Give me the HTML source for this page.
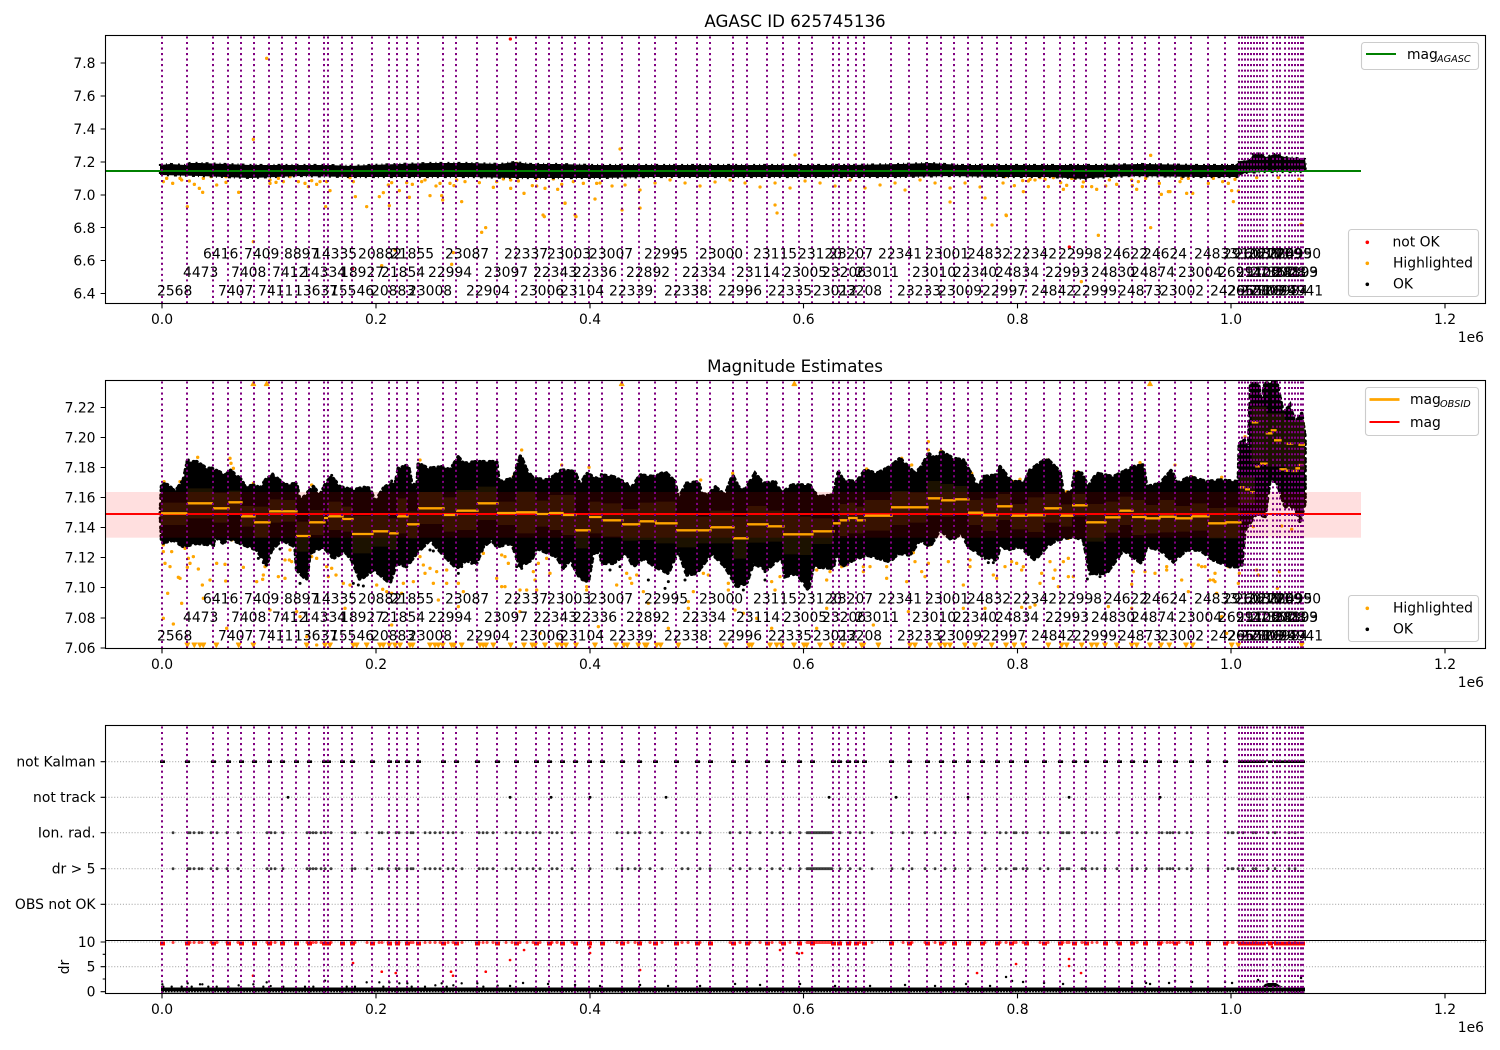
<!DOCTYPE html>
<html lang="en">
<head>
<meta charset="utf-8">
<title>AGASC ID 625745136</title>
<style>
html,body{margin:0;padding:0;background:#fff}
svg{display:block}
text{font-family:"DejaVu Sans","Liberation Sans",sans-serif;font-size:13.89px;fill:#000}
.r{text-anchor:end}.c{text-anchor:middle}
.sub{font-size:9.7px;font-style:italic}
.d{fill:none;stroke-linecap:round}
</style>
</head>
<body>
<svg xmlns="http://www.w3.org/2000/svg" width="1500" height="1050" viewBox="0 0 1500 1050">
<defs>
<clipPath id="c1"><rect x="105.5" y="35.5" width="1380" height="268"/></clipPath>
<clipPath id="c2"><rect x="105.5" y="380.5" width="1380" height="268"/></clipPath>
<clipPath id="c3"><rect x="105.5" y="725.5" width="1380" height="268"/></clipPath>
<path id="v" fill="none" stroke="#800080" stroke-width="2" stroke-dasharray="2.08 3.44" d="M162 0v-268M187 0v-268M213 0v-268M228 0v-268M241 0v-268M254 0v-268M269 0v-268M282 0v-268M296 0v-268M309 0v-268M324 0v-268M328 0v-268M342 0v-268M352 0v-268M372 0v-268M389 0v-268M397 0v-268M407 0v-268M418 0v-268M443 0v-268M456 0v-268M477 0v-268M497 0v-268M516 0v-268M536 0v-268M549 0v-268M562 0v-268M575 0v-268M589 0v-268M602 0v-268M622 0v-268M639 0v-268M655 0v-268M676 0v-268M697 0v-268M710 0v-268M733 0v-268M747 0v-268M767 0v-268M783 0v-268M799 0v-268M812 0v-268M833 0v-268M839 0v-268M848 0v-268M856 0v-268M864 0v-268M891 0v-268M909 0v-268M927 0v-268M941 0v-268M954 0v-268M968 0v-268M982 0v-268M997 0v-268M1011 0v-268M1026 0v-268M1044 0v-268M1060 0v-268M1074 0v-268M1086 0v-268M1105 0v-268M1119 0v-268M1132 0v-268M1145 0v-268M1159 0v-268M1175 0v-268M1191 0v-268M1208 0v-268M1225 0v-268M1239 0v-268M1242 0v-268M1245 0v-268M1248 0v-268M1251 0v-268M1254 0v-268M1257 0v-268M1260 0v-268M1263 0v-268M1267 0v-268M1273 0v-268M1277 0v-268M1280 0v-268M1285 0v-268M1289 0v-268M1292 0v-268M1295 0v-268M1298 0v-268M1301 0v-268M1303 0v-268"/>
<path id="m" fill="none" d="M160 0h5M185 0h5M211 0h5M226 0h5M239 0h5M252 0h5M267 0h5M280 0h5M294 0h5M307 0h5M322 0h5M326 0h5M340 0h5M350 0h5M370 0h5M387 0h5M395 0h5M405 0h5M416 0h5M441 0h5M454 0h5M475 0h5M495 0h5M514 0h5M534 0h5M547 0h5M560 0h5M573 0h5M587 0h5M600 0h5M620 0h5M637 0h5M653 0h5M674 0h5M695 0h5M708 0h5M731 0h5M745 0h5M765 0h5M781 0h5M797 0h5M810 0h5M831 0h5M837 0h5M846 0h5M854 0h5M862 0h5M889 0h5M907 0h5M925 0h5M939 0h5M952 0h5M966 0h5M980 0h5M995 0h5M1009 0h5M1024 0h5M1042 0h5M1058 0h5M1072 0h5M1084 0h5M1103 0h5M1117 0h5M1130 0h5M1143 0h5M1157 0h5M1173 0h5M1189 0h5M1206 0h5M1223 0h5M1238 0H1266M1268 0h5M1274 0h5M1278 0H1305"/>
<path id="f" class="d" d="M173 0h.1M188 0h.1M190 0h.1M194 0h.1M199 0h.1M202 0h.1M211 0h.1M217 0h.1M227 0h.1M238 0h.1M267 0h.1M271 0h.1M275 0h.1M283 0h.1M307 0h.1M310 0h.1M313 0h.1M316 0h.1M321 0h.1M325 0h.1M331 0h.1M352 0h.1M355 0h.1M367 0h.1M379 0h.1M382 0h.1M388 0h.1M396 0h.1M399 0h.1M407 0h.1M411 0h.1M413 0h.1M425 0h.1M430 0h.1M435 0h.1M440 0h.1M448 0h.1M453 0h.1M462 0h.1M479 0h.1M483 0h.1M487 0h.1M493 0h.1M506 0h.1M512 0h.1M520 0h.1M527 0h.1M533 0h.1M540 0h.1M552 0h.1M557 0h.1M572 0h.1M590 0h.1M617 0h.1M622 0h.1M628 0h.1M635 0h.1M640 0h.1M650 0h.1M662 0h.1M682 0h.1M688 0h.1M700 0h.1M710 0h.1M730 0h.1M740 0h.1M750 0h.1M760 0h.1M772 0h.1M780 0h.1M790 0h.1M800 0h.1M807 0H832M840 0h.1M850 0h.1M860 0h.1M872 0h.1M892 0h.1M903 0h.1M912 0h.1M925 0h.1M935 0h.1M945 0h.1M955 0h.1M970 0h.1M985 0h.1M1000 0h.1M1006 0h.1M1014 0h.1M1016 0h.1M1023 0h.1M1027 0h.1M1040 0h.1M1048 0h.1M1061 0h.1M1063 0h.1M1067 0h.1M1069 0h.1M1082 0h.1M1085 0h.1M1092 0h.1M1097 0h.1M1105 0h.1M1117 0h.1M1132 0h.1M1137 0h.1M1146 0h.1M1159 0h.1M1162 0h.1M1167 0h.1M1170 0h.1M1173 0h.1M1179 0h.1M1187 0h.1M1192 0h.1M1208 0h.1M1228 0h.1M1232 0h.1M1233 0h.1M1238 0h.1M1243 0h.1M1253 0h.1M1256 0h.1M1268 0h.1M1275 0h.1M1289 0h.1M1295 0h.1"/>
<path id="B1" d="M160 165 170 164 185 165 190 163 200 163 225 164 250 165 275 165 300 165 330 165 350 166 370 165 400 164 430 163 470 163 500 164 515 162 530 164 560 164 590 165 650 165 700 165 760 165 800 165 850 165 900 164 930 163 960 165 1000 165 1040 165 1100 165 1140 164 1200 165 1235 165 1240 161 1250 160 1253 154 1260 153 1266 157 1275 154 1285 157 1296 158 1305 159 1306 166 1305 172 1262 172 1245 173 1237 177 1200 177 1130 176 1090 178 1085 179 1050 177 1000 177 950 176 900 177 850 177 800 177 750 177 700 177 650 177 600 178 550 178 515 178 470 177 430 177 350 177 300 176 250 178 200 176 160 175Z"/>
<path id="Pa" d="M181 430 185 340 205 345 225 365 250 330 262 275 290 275 320 295 335 295 378 315 390 300 425 330 435 350 465 345 480 355 500 325 520 315 555 345 590 340 600 395 625 365 640 350 660 375 680 335 695 320 720 350 760 360 790 352 810 355 825 395 850 355 870 340 885 345 895 295 925 285 935 340 945 345 950 370 955 280 985 295 1030 290 1050 300 1075 260 1090 280 1130 275 1190 275 1197 335 1240 325 1262 255 1280 300 1300 325 1345 330 1385 300 1425 305 1440 345 1460 310 1500 330 1500 545 1480 550 1465 635 1440 625 1410 570 1390 595 1370 560 1345 550 1310 535 1295 570 1260 590 1235 520 1190 530 1175 510 1150 530 1130 580 1100 570 1070 595 1030 555 990 510 950 550 920 590 890 580 870 640 835 610 820 600 780 630 755 570 735 545 700 565 670 530 630 550 620 630 590 600 585 530 545 510 515 540 500 585 470 540 420 520 385 505 370 520 345 500 340 525 290 520 250 530 220 510 185 520Z"/>
<path id="Pb" d="M0 330 5 315 40 320 80 340 90 360 120 315 165 320 195 305 225 335 235 385 260 340 295 335 305 370 325 375 345 350 375 375 398 315 415 350 435 360 465 310 490 340 525 335 545 370 575 345 630 345 640 365 660 380 700 375 715 305 730 330 770 335 795 300 830 310 870 290 900 265 925 290 945 310 965 290 985 250 1005 265 1025 245 1060 265 1090 270 1110 305 1135 355 1150 320 1190 315 1202 290 1202 520 1190 570 1150 560 1105 530 1085 490 1055 510 1020 480 990 530 960 510 930 555 895 550 870 575 800 555 760 570 725 590 710 540 700 595 640 590 625 660 590 610 555 620 545 560 500 600 460 580 440 640 410 650 375 590 335 550 290 610 260 615 235 540 205 610 165 590 130 565 100 590 80 550 40 580 5 580 0 545Z"/>
<path id="Pc" d="M0 290 35 335 75 335 90 300 140 265 180 305 190 370 215 365 225 305 245 310 265 350 290 310 340 320 400 290 430 285 440 350 480 340 515 300 530 340 570 320 620 335 660 330 715 335 718 220 735 210 745 260 752 40 775 40 785 100 795 40 830 35 850 130 870 105 885 160 905 130 915 200 915 400 900 455 885 410 855 410 830 335 810 330 795 440 770 430 735 480 725 590 690 590 640 570 600 540 560 540 520 575 480 540 440 530 425 580 370 540 320 610 270 610 250 510 220 500 170 510 140 530 105 570 60 530 20 540 0 520Z"/>
</defs>
<rect width="1500" height="1050" fill="#fff"/>

<!-- ===== Panel 1 ===== -->
<g clip-path="url(#c1)">
 <g transform="translate(100,0) scale(.33333)" class="d" stroke="#ffa500" stroke-width="10">
  <path d="M190 545h.1M200 535h.1M218 550h.1M240 535h.1M245 540h.1M268 543h.1M283 553h.1M298 565h.1M308 577h.1M310 535h.1M333 530h.1M350 555h.1M378 547h.1M378 530h.1M416 577h.1M262 620h.1M460 418h.1M500 175h.1M460 725h.1M510 550h.1M510 540h.1M528 547h.1M535 535h.1M550 545h.1M570 530h.1M595 545h.1M615 550h.1M625 560h.1M635 542h.1M650 553h.1M660 545h.1M690 572h.1M677 620h.1M680 545h.1M750 533h.1M760 545h.1M766 590h.1M800 620h.1M838 590h.1M850 578h.1M868 617h.1M865 555h.1M875 548h.1M898 572h.1M928 592h.1M920 548h.1M937 553h.1M885 750h.1M845 797h.1M965 545h.1M975 540h.1M990 587h.1M1008 558h.1M1020 550h.1M1025 587h.1M1028 600h.1M1050 550h.1M1062 557h.1M1070 540h.1M1085 605h.1M1095 545h.1M1060 758h.1M1055 793h.1M1138 548h.1M1145 697h.1M1157 683h.1M1180 562h.1M1190 545h.1M1210 537h.1M1232 565h.1M1232 540h.1M1255 543h.1M1272 580h.1M1297 557h.1M1310 558h.1M1310 535h.1M1335 565h.1M1333 650h.1M1360 537h.1M1373 568h.1M1385 553h.1M1395 610h.1M1428 650h.1M1420 545h.1M1450 550h.1M1485 597h.1M1490 550h.1M1250 490h.1"/>
 </g>
 <path class="d" stroke="#ffa500" stroke-width="3.2" d="M620 149h.1M795 155h.1M777 213h.1M775 205h.1M543 215h.1M565 203h.1M575 215h.1M622 210h.1M640 208h.1M600 183h.1M612 186h.1M625 185h.1M640 190h.1M655 183h.1M670 180h.1M685 183h.1M700 186h.1M715 182h.1M730 180h.1M745 183h.1M760 187h.1M775 183h.1M790 188h.1M805 181h.1M820 183h.1M835 186h.1M850 180h.1M865 188h.1M880 185h.1M895 183h.1M905 190h.1M920 180h.1M935 183h.1M950 202h.1M950 188h.1M965 183h.1M980 187h.1M992 225h.1M1006 215h.1M985 198h.1M1003 183h.1"/>
 <g transform="translate(1000,0) scale(.33333)" class="d" stroke="#ffa500" stroke-width="10">
  <path d="M15 530h.1M43 557h.1M70 575h.1M68 542h.1M85 543h.1M90 538h.1M105 540h.1M120 533h.1M135 538h.1M145 560h.1M160 533h.1M182 548h.1M190 568h.1M200 556h.1M215 535h.1M225 535h.1M250 546h.1M247 560h.1M275 560h.1M290 568h.1M317 558h.1M328 540h.1M350 553h.1M397 557h.1M410 568h.1M415 545h.1M395 540h.1M437 535h.1M452 466h.1M478 550h.1M484 583h.1M505 575h.1M510 575h.1M545 535h.1M540 545h.1M560 580h.1M578 580h.1M565 535h.1M625 550h.1M640 535h.1M668 545h.1M695 572h.1M685 550h.1M715 573h.1M700 605h.1M705 538h.1M770 533h.1M835 533h.1M897 538h.1M903 673h.1M452 683h.1M295 706h.1M244 845h.1M19 647h.1"/>
 </g>
 <use href="#B1" fill="#000"/>
 <use href="#B1" fill="none" stroke="#000" stroke-width="2.2" stroke-dasharray="2 4 1 3 3 5"/>
 <path d="M105.5 171H1361" stroke="#008000" stroke-width="2.1" fill="none"/>
 <path class="d" stroke="#f00" stroke-width="3.2" d="M510.3 39h.1M352.3 269h.1M1069.3 247h.1"/>
 <use href="#v" x="0" y="303.5"/>
</g>
<rect x="105.5" y="35.5" width="1380" height="268" fill="none" stroke="#000" stroke-width="1.1"/>
<path fill="none" stroke="#000" stroke-width="1.1" d="M162 303.5v4.9M376 303.5v4.9M590 303.5v4.9M803.5 303.5v4.9M1017.5 303.5v4.9M1231 303.5v4.9M1445 303.5v4.9M105.5 63h-4.9M105.5 96h-4.9M105.5 129h-4.9M105.5 162h-4.9M105.5 195h-4.9M105.5 227.500h-4.9M105.5 260.500h-4.9M105.5 293.500h-4.9"/>
<text class="c" x="795" y="27" style="font-size:16.67px">AGASC ID 625745136</text>
<g class="r"><text x="95.500" y="68">7.8</text><text x="95.500" y="101">7.6</text><text x="95.500" y="134">7.4</text><text x="95.500" y="167">7.2</text><text x="95.500" y="200">7.0</text><text x="95.500" y="233">6.8</text><text x="95.500" y="265.500">6.6</text><text x="95.500" y="298.500">6.4</text></g>
<g class="c"><text x="162" y="324">0.0</text><text x="376" y="324">0.2</text><text x="590" y="324">0.4</text><text x="803.500" y="324">0.6</text><text x="1017.500" y="324">0.8</text><text x="1231" y="324">1.0</text><text x="1445" y="324">1.2</text></g>
<text class="r" x="1484" y="342">1e6</text>
<text y="258.500"><tspan x="203">6416</tspan><tspan x="244">7409</tspan><tspan x="284">8897</tspan><tspan x="313">14335</tspan><tspan x="358">20882</tspan><tspan x="390">21855</tspan><tspan x="445">23087</tspan><tspan x="504">22337</tspan><tspan x="547">23003</tspan><tspan x="589">23007</tspan><tspan x="644">22995</tspan><tspan x="699">23000</tspan><tspan x="753">23115</tspan><tspan x="798">23120</tspan><tspan x="829">23207</tspan><tspan x="878">22341</tspan><tspan x="925">23001</tspan><tspan x="967">24832</tspan><tspan x="1013">22342</tspan><tspan x="1058">22998</tspan><tspan x="1104">24622</tspan><tspan x="1143">24624</tspan><tspan x="1194">24833</tspan><tspan x="1223">29101</tspan><tspan x="1235">26038</tspan><tspan x="1247">26181</tspan><tspan x="1258">27269</tspan><tspan x="1268">28099</tspan><tspan x="1277">24950</tspan></text>
<text y="277"><tspan x="183">4473</tspan><tspan x="231">7408</tspan><tspan x="272">7412</tspan><tspan x="302">14334</tspan><tspan x="340">18927</tspan><tspan x="381">21854</tspan><tspan x="428">22994</tspan><tspan x="484">23097</tspan><tspan x="533">22343</tspan><tspan x="573">22336</tspan><tspan x="626">22892</tspan><tspan x="682">22334</tspan><tspan x="736">23114</tspan><tspan x="783">23005</tspan><tspan x="822">23206</tspan><tspan x="855">23011</tspan><tspan x="912">23010</tspan><tspan x="953">22340</tspan><tspan x="995">24834</tspan><tspan x="1045">22993</tspan><tspan x="1091">24830</tspan><tspan x="1131">24874</tspan><tspan x="1178">23004</tspan><tspan x="1218">26914</tspan><tspan x="1236">29102</tspan><tspan x="1250">27367</tspan><tspan x="1262">26028</tspan><tspan x="1274">28103</tspan><tspan x="1274">24899</tspan></text>
<text y="295.500"><tspan x="157">2568</tspan><tspan x="218">7407</tspan><tspan x="258">7411</tspan><tspan x="294">13637</tspan><tspan x="330">15546</tspan><tspan x="371">20883</tspan><tspan x="408">23008</tspan><tspan x="466">22904</tspan><tspan x="520">23006</tspan><tspan x="560">23104</tspan><tspan x="609">22339</tspan><tspan x="664">22338</tspan><tspan x="718">22996</tspan><tspan x="768">22335</tspan><tspan x="813">23012</tspan><tspan x="838">23208</tspan><tspan x="897">23233</tspan><tspan x="938">23009</tspan><tspan x="982">22997</tspan><tspan x="1031">24842</tspan><tspan x="1073">22999</tspan><tspan x="1118">24873</tspan><tspan x="1160">23002</tspan><tspan x="1210">24296</tspan><tspan x="1227">26551</tspan><tspan x="1240">27809</tspan><tspan x="1252">28099</tspan><tspan x="1264">26984</tspan><tspan x="1279">24941</tspan></text>
<rect x="1361.500" y="42.500" width="117" height="27" rx="3" fill="#fff" fill-opacity=".8" stroke="#ccc" stroke-width="1.1"/>
<path d="M1366 54h30" stroke="#008000" stroke-width="2.1"/>
<text x="1407" y="59">mag</text><text class="sub" x="1437" y="62">AGASC</text>
<rect x="1348.500" y="229.500" width="130" height="67" rx="3" fill="#fff" fill-opacity=".8" stroke="#ccc" stroke-width="1.1"/>
<circle cx="1367.300" cy="242.300" r="1.800" fill="#f00"/><circle cx="1367.300" cy="263.300" r="1.800" fill="#ffa500"/><circle cx="1367.300" cy="284.300" r="1.800" fill="#000"/>
<text x="1392.500" y="246.500">not OK</text><text x="1393" y="267.500">Highlighted</text><text x="1393" y="288.500">OK</text>

<!-- ===== Panel 2 ===== -->
<g clip-path="url(#c2)">
 <g transform="translate(100,370) scale(.33333)">
  <path class="d" stroke="#ffa500" stroke-width="10" d="M195 580h.1M210 590h.1M235 622h.1M240 625h.1M220 762h.1M203 670h.1M190 745h.1M215 545h.1M190 545h.1M265 565h.1M280 560h.1M270 580h.1M295 597h.1M262 592h.1M307 645h.1M330 630h.1M350 580h.1M375 583h.1M377 633h.1M380 775h.1M430 592h.1M470 635h.1M488 628h.1M495 590h.1M490 615h.1M510 720h.1M535 620h.1M555 570h.1M568 570h.1M575 575h.1M570 540h.1M555 625h.1M590 725h.1M600 740h.1M635 560h.1M650 565h.1M650 825h.1M620 800h.1M680 590h.1M685 620h.1M695 595h.1M708 615h.1M730 640h.1M735 715h.1M750 645h.1M830 645h.1M848 658h.1M860 665h.1M875 670h.1M875 765h.1M905 670h.1M910 640h.1M940 635h.1M960 560h.1M970 585h.1M975 610h.1M990 595h.1M1000 640h.1M1010 605h.1M1015 690h.1M1040 600h.1M1040 640h.1M1075 640h.1M1075 710h.1M1090 665h.1M1150 550h.1M1190 625h.1M1205 555h.1M1215 560h.1M1225 580h.1M1205 650h.1M1215 650h.1M1260 660h.1M1280 660h.1M1260 725h.1M1300 605h.1M1305 630h.1M1310 660h.1M1315 580h.1M1340 565h.1M1350 610h.1M1320 790h.1M1380 565h.1M1390 575h.1M1460 660h.1M1495 770h.1M310 685h.1M245 700h.1M293 262h.1M390 265h.1M393 280h.1M400 295h.1M240 335h.1M250 328h.1M192 335h.1M460 340h.1M635 345h.1M960 270h.1M1065 285h.1M1265 240h.1M1240 320h.1M1245 310h.1M1205 335h.1M1385 285h.1M1467 292h.1M190 525h.1M255 535h.1M395 510h.1M410 508h.1M1385 570h.1M1380 560h.1M1455 630h.1M1460 650h.1M1240 525h.1M630 560h.1"/>
  <path fill="#ffa500" stroke="#ffa500" stroke-width="3" stroke-linejoin="round" d="M262 832l7-13h-14zM283 832l7-13h-14zM300 832l7-13h-14zM310 832l7-13h-14zM349 832l7-13h-14zM416 832l7-13h-14zM460 832l7-13h-14zM620 832l7-13h-14zM675 832l7-13h-14zM690 832l7-13h-14zM760 832l7-13h-14zM770 832l7-13h-14zM800 832l7-13h-14zM840 832l7-13h-14zM850 832l7-13h-14zM868 832l7-13h-14zM885 832l7-13h-14zM900 832l7-13h-14zM930 832l7-13h-14zM938 832l7-13h-14zM990 832l7-13h-14zM1005 832l7-13h-14zM1015 832l7-13h-14zM1028 832l7-13h-14zM1055 832l7-13h-14zM1062 832l7-13h-14zM1085 832l7-13h-14zM1140 832l7-13h-14zM1150 832l7-13h-14zM1158 832l7-13h-14zM1180 832l7-13h-14zM1232 832l7-13h-14zM1272 832l7-13h-14zM1297 832l7-13h-14zM1305 832l7-13h-14zM1335 832l7-13h-14zM1372 832l7-13h-14zM1385 832l7-13h-14zM1398 832l7-13h-14zM1428 832l7-13h-14zM1485 832l7-13h-14zM460 34l7 13h-14zM500 34l7 13h-14z"/>
  <use href="#Pa" fill="#000"/>
  <use href="#Pa" fill="none" stroke="#000" stroke-width="11" stroke-linecap="round" stroke-dasharray="2 13 1 9 3 17 1 7"/>
  <path class="d" stroke="#000" stroke-width="9" d="M265 270h.1M600 640h.1M475 565h.1M490 578h.1M540 537h.1M760 640h.1M775 645h.1M790 648h.1M835 605h.1M990 540h.1M1000 543h.1M1075 610h.1M1085 590h.1M1105 575h.1M1115 580h.1M1130 600h.1M875 333h.1M695 316h.1M518 312h.1M1265 595h.1M1250 590h.1"/>
 </g>
 <g transform="translate(600,370) scale(.33333)">
  <path class="d" stroke="#ffa500" stroke-width="10" d="M50 645h.1M80 610h.1M90 625h.1M95 640h.1M130 665h.1M110 615h.1M145 700h.1M205 775h.1M265 695h.1M265 715h.1M280 665h.1M310 610h.1M325 615h.1M385 660h.1M385 640h.1M405 720h.1M430 730h.1M470 745h.1M515 775h.1M515 635h.1M525 660h.1M540 620h.1M650 600h.1M680 630h.1M690 605h.1M680 715h.1M650 775h.1M725 590h.1M740 585h.1M745 575h.1M790 590h.1M790 605h.1M810 590h.1M820 765h.1M860 590h.1M860 625h.1M920 635h.1M925 725h.1M945 575h.1M965 605h.1M975 620h.1M985 580h.1M1045 575h.1M1090 645h.1M1090 715h.1M1110 570h.1M1110 590h.1M1155 715h.1M1180 615h.1M1190 625h.1M398 310h.1M985 215h.1M985 240h.1M1023 243h.1M905 265h.1M935 285h.1M875 292h.1M800 297h.1M990 525h.1M700 377h.1M302 330h.1M1115 310h.1M940 548h.1"/>
  <path fill="#ffa500" stroke="#ffa500" stroke-width="3" stroke-linejoin="round" d="M48 832l7-13h-14zM72 832l7-13h-14zM82 832l7-13h-14zM115 832l7-13h-14zM135 832l7-13h-14zM140 832l7-13h-14zM170 832l7-13h-14zM182 832l7-13h-14zM235 832l7-13h-14zM378 832l7-13h-14zM447 832l7-13h-14zM455 832l7-13h-14zM510 832l7-13h-14zM530 832l7-13h-14zM545 832l7-13h-14zM582 832l7-13h-14zM612 832l7-13h-14zM620 832l7-13h-14zM660 832l7-13h-14zM695 832l7-13h-14zM730 832l7-13h-14zM785 832l7-13h-14zM790 832l7-13h-14zM835 832l7-13h-14zM930 832l7-13h-14zM945 832l7-13h-14zM990 832l7-13h-14zM1020 832l7-13h-14zM1035 832l7-13h-14zM1050 832l7-13h-14zM1095 832l7-13h-14zM1125 832l7-13h-14zM1175 832l7-13h-14zM65 34l7 13h-14zM583 34l7 13h-14z"/>
  <use href="#Pb" fill="#000"/>
  <use href="#Pb" fill="none" stroke="#000" stroke-width="11" stroke-linecap="round" stroke-dasharray="2 13 1 9 3 17 1 7"/>
  <path class="d" stroke="#000" stroke-width="9" d="M30 600h.1M145 630h.1M205 635h.1M195 655h.1M255 630h.1M430 660h.1M495 605h.1M495 630h.1M1155 565h.1M1180 578h.1M60 590h.1M1165 578h.1"/>
 </g>
 <g transform="translate(1000,370) scale(.33333)">
  <path class="d" stroke="#ffa500" stroke-width="10" d="M15 590h.1M35 575h.1M50 580h.1M70 590h.1M65 600h.1M120 640h.1M125 610h.1M160 625h.1M165 600h.1M150 575h.1M190 575h.1M205 565h.1M205 620h.1M220 620h.1M175 650h.1M65 712h.1M90 712h.1M105 705h.1M325 710h.1M395 715h.1M400 605h.1M395 643h.1M435 605h.1M465 610h.1M500 590h.1M500 600h.1M545 630h.1M565 665h.1M595 585h.1M605 590h.1M615 590h.1M630 630h.1M640 630h.1M645 635h.1M650 670h.1M645 610h.1M665 740h.1M680 790h.1M685 590h.1M715 640h.1M718 610h.1M770 600h.1M775 615h.1M838 605h.1M832 655h.1M845 468h.1M875 478h.1M760 470h.1M142 270h.1M60 328h.1M40 335h.1M232 305h.1M200 365h.1M665 322h.1M720 352h.1M525 285h.1M575 320h.1M445 350h.1M545 340h.1M455 530h.1M420 278h.1M735 200h.1M870 105h.1M858 170h.1M880 175h.1M205 505h.1M440 530h.1M470 532h.1"/>
  <path fill="#ffa500" stroke="#ffa500" stroke-width="3" stroke-linejoin="round" d="M18 832l7-13h-14zM43 832l7-13h-14zM70 832l7-13h-14zM145 832l7-13h-14zM185 832l7-13h-14zM200 832l7-13h-14zM245 832l7-13h-14zM275 832l7-13h-14zM290 832l7-13h-14zM315 832l7-13h-14zM350 832l7-13h-14zM395 832l7-13h-14zM410 832l7-13h-14zM450 832l7-13h-14zM483 832l7-13h-14zM508 832l7-13h-14zM558 832l7-13h-14zM578 832l7-13h-14zM695 832l7-13h-14zM715 832l7-13h-14zM905 832l7-13h-14zM450 34l7 13h-14zM800 34l7 13h-14zM828 34l7 13h-14z"/>
  <use href="#Pc" fill="#000"/>
  <use href="#Pc" fill="none" stroke="#000" stroke-width="11" stroke-linecap="round" stroke-dasharray="2 13 1 9 3 17 1 7"/>
  <path class="d" stroke="#000" stroke-width="9" d="M262 627h.1M270 612h.1M290 612h.1M300 620h.1M315 605h.1M745 250h.1"/>
 </g>
 <rect x="105.500" y="492" width="1255.500" height="45.700" fill="#f00" fill-opacity=".125"/>
 <g transform="translate(100,370) scale(.33333)" fill="#ffa500" fill-opacity=".11">
  <path d="M183 398H262V465H183ZM262 355H339V445H262ZM339 368H384V458H339ZM385 362H423V432H385ZM423 408H462V470H423ZM462 410H507V503H462ZM507 388H546V458H507ZM546 390H588V455H546ZM588 455H627V545H588ZM627 420H672V495H627ZM684 395H726V480H684ZM726 410H756V485H726ZM756 437H816V550H756ZM816 435H867V530H816ZM867 445H891V540H867ZM891 385H921V490H891ZM921 425H954V505H921ZM954 366H1029V462H954ZM1029 382H1068V485H1029ZM1068 360H1131V480H1068ZM1131 350H1191V450H1131ZM1191 395H1248V465H1191ZM1248 365H1307V490H1248ZM1307 392H1347V470H1307ZM1347 375H1386V480H1347ZM1386 375H1425V495H1386ZM1425 435H1467V535H1425ZM1467 395H1505V490H1467Z"/>
 </g>
 <g transform="translate(600,370) scale(.33333)" fill="#ffa500" fill-opacity=".11">
  <path d="M5 400H66V500H5ZM66 417H116V512H66ZM116 398H165V510H116ZM165 395H228V520H165ZM228 430H291V532H228ZM291 440H330V520H291ZM330 422H399V520H330ZM399 440H441V566H399ZM441 408H501V518H441ZM501 422H549V515H501ZM549 435H597V553H549ZM597 440H636V555H597ZM636 445H699V522H636ZM717 402H744V498H717ZM744 398H768V490H744ZM768 410H792V490H768ZM792 390H873V482H792ZM873 363H927V465H873ZM927 367H981V458H927ZM981 333H1023V438H981ZM1023 342H1062V440H1023ZM1062 348H1104V430H1062ZM1104 390H1146V465H1104ZM1146 385H1191V483H1146Z"/>
 </g>
 <g transform="translate(1000,370) scale(.33333)" fill="#ffa500" fill-opacity=".11">
  <path d="M-9 372H33V450H-9ZM33 402H84V478H33ZM84 382H132V486H84ZM132 372H180V458H132ZM180 403H216V470H180ZM216 372H258V440H216ZM258 402H315V515H258ZM315 395H357V488H315ZM357 380H396V465H357ZM396 390H435V495H396ZM435 405H477V490H435ZM477 390H525V487H477ZM525 408H573V485H525ZM573 400H624V482H573ZM624 414H675V505H624ZM675 412H720V505H675ZM720 320H765V400H720ZM755 110H800V280H755ZM800 130H855V290H800ZM855 150H915V300H855Z"/>
 </g>
 <path d="M105.500 514H1361" stroke="#f00" stroke-width="2.1" fill="none"/>
 <g transform="translate(100,370) scale(.33333)" fill="none" stroke="#ffa500" stroke-width="7">
  <path d="M183 430H262M262 400H339M339 415H389M385 397H428M423 439H467M462 457H512M507 424H546M546 424H593M588 498H632M627 457H677M672 444H684M684 439H731M726 447H761M756 492H821M816 484H867M867 490H896M891 439H926M921 463H959M954 415H1034M1029 435H1073M1068 422H1136M1131 400H1196M1191 429H1248M1248 427H1312M1307 432H1347M1347 429H1391M1386 435H1430M1425 481H1472M1467 441H1505"/>
 </g>
 <g transform="translate(600,370) scale(.33333)" fill="none" stroke="#ffa500" stroke-width="7">
  <path d="M5 451H71M66 463H121M116 454H170M165 460H233M228 481H296M291 481H335M330 472H404M399 505H446M441 463H506M501 469H554M549 493H602M597 493H641M636 484H704M699 460H722M717 451H749M744 444H773M768 451H797M792 437H878M873 412H932M927 412H986M981 385H1028M1023 391H1067M1062 388H1109M1104 428H1151M1146 436H1196"/>
 </g>
 <g transform="translate(1000,370) scale(.33333)" fill="none" stroke="#ffa500" stroke-width="7">
  <path d="M-9 409H38M33 437H84M84 436H137M132 415H185M180 437H221M216 406H263M258 457H320M315 442H362M357 422H401M396 441H440M435 445H482M477 440H530M525 445H578M573 439H629M624 460H680M675 457H725M720 352H735M735 358H750M750 367H765M755 157H775M766 289H780M780 281H803M797 190H818M812 181H830M822 211H845M838 298H860M856 302H870M860 221H880M873 303H895M886 295H900M895 224H915M895 285H910"/>
 </g>
 <use href="#v" x="0" y="648.500"/>
</g>
<rect x="105.500" y="380.500" width="1380" height="268" fill="none" stroke="#000" stroke-width="1.1"/>
<path fill="none" stroke="#000" stroke-width="1.1" d="M162 648.500v4.900M376 648.500v4.900M590 648.500v4.900M803.500 648.500v4.900M1017.500 648.500v4.900M1231 648.500v4.900M1445 648.500v4.900M105.500 407.500h-4.900M105.500 437.500h-4.900M105.500 467.500h-4.900M105.500 497.500h-4.900M105.500 527.500h-4.900M105.500 557.500h-4.900M105.500 587.500h-4.900M105.500 618h-4.900M105.500 648h-4.900"/>
<text class="c" x="795" y="372" style="font-size:16.67px">Magnitude Estimates</text>
<g class="r"><text x="95.500" y="412.500">7.22</text><text x="95.500" y="442.500">7.20</text><text x="95.500" y="472.500">7.18</text><text x="95.500" y="502.500">7.16</text><text x="95.500" y="532.500">7.14</text><text x="95.500" y="562.500">7.12</text><text x="95.500" y="592.500">7.10</text><text x="95.500" y="623">7.08</text><text x="95.500" y="653">7.06</text></g>
<g class="c"><text x="162" y="669">0.0</text><text x="376" y="669">0.2</text><text x="590" y="669">0.4</text><text x="803.500" y="669">0.6</text><text x="1017.500" y="669">0.8</text><text x="1231" y="669">1.0</text><text x="1445" y="669">1.2</text></g>
<text class="r" x="1484" y="687">1e6</text>
<text y="603.500"><tspan x="203">6416</tspan><tspan x="244">7409</tspan><tspan x="284">8897</tspan><tspan x="313">14335</tspan><tspan x="358">20882</tspan><tspan x="390">21855</tspan><tspan x="445">23087</tspan><tspan x="504">22337</tspan><tspan x="547">23003</tspan><tspan x="589">23007</tspan><tspan x="644">22995</tspan><tspan x="699">23000</tspan><tspan x="753">23115</tspan><tspan x="798">23120</tspan><tspan x="829">23207</tspan><tspan x="878">22341</tspan><tspan x="925">23001</tspan><tspan x="967">24832</tspan><tspan x="1013">22342</tspan><tspan x="1058">22998</tspan><tspan x="1104">24622</tspan><tspan x="1143">24624</tspan><tspan x="1194">24833</tspan><tspan x="1223">29101</tspan><tspan x="1235">26038</tspan><tspan x="1247">26181</tspan><tspan x="1258">27269</tspan><tspan x="1268">28099</tspan><tspan x="1277">24950</tspan></text>
<text y="622"><tspan x="183">4473</tspan><tspan x="231">7408</tspan><tspan x="272">7412</tspan><tspan x="302">14334</tspan><tspan x="340">18927</tspan><tspan x="381">21854</tspan><tspan x="428">22994</tspan><tspan x="484">23097</tspan><tspan x="533">22343</tspan><tspan x="573">22336</tspan><tspan x="626">22892</tspan><tspan x="682">22334</tspan><tspan x="736">23114</tspan><tspan x="783">23005</tspan><tspan x="822">23206</tspan><tspan x="855">23011</tspan><tspan x="912">23010</tspan><tspan x="953">22340</tspan><tspan x="995">24834</tspan><tspan x="1045">22993</tspan><tspan x="1091">24830</tspan><tspan x="1131">24874</tspan><tspan x="1178">23004</tspan><tspan x="1218">26914</tspan><tspan x="1236">29102</tspan><tspan x="1250">27367</tspan><tspan x="1262">26028</tspan><tspan x="1274">28103</tspan><tspan x="1274">24899</tspan></text>
<text y="640.500"><tspan x="157">2568</tspan><tspan x="218">7407</tspan><tspan x="258">7411</tspan><tspan x="294">13637</tspan><tspan x="330">15546</tspan><tspan x="371">20883</tspan><tspan x="408">23008</tspan><tspan x="466">22904</tspan><tspan x="520">23006</tspan><tspan x="560">23104</tspan><tspan x="609">22339</tspan><tspan x="664">22338</tspan><tspan x="718">22996</tspan><tspan x="768">22335</tspan><tspan x="813">23012</tspan><tspan x="838">23208</tspan><tspan x="897">23233</tspan><tspan x="938">23009</tspan><tspan x="982">22997</tspan><tspan x="1031">24842</tspan><tspan x="1073">22999</tspan><tspan x="1118">24873</tspan><tspan x="1160">23002</tspan><tspan x="1210">24296</tspan><tspan x="1227">26551</tspan><tspan x="1240">27809</tspan><tspan x="1252">28099</tspan><tspan x="1264">26984</tspan><tspan x="1279">24941</tspan></text>
<rect x="1365.500" y="387.500" width="113" height="48" rx="3" fill="#fff" fill-opacity=".8" stroke="#ccc" stroke-width="1.1"/>
<path d="M1369.500 399.500h30" stroke="#ffa500" stroke-width="2.800"/>
<path d="M1369.500 422h30" stroke="#f00" stroke-width="2.100"/>
<text x="1410" y="404">mag</text><text class="sub" x="1440" y="407">OBSID</text><text x="1410" y="427">mag</text>
<rect x="1348.500" y="595.500" width="130" height="46" rx="3" fill="#fff" fill-opacity=".8" stroke="#ccc" stroke-width="1.1"/>
<circle cx="1367.300" cy="608.300" r="1.800" fill="#ffa500"/><circle cx="1367.300" cy="629.300" r="1.800" fill="#000"/>
<text x="1393" y="612.500">Highlighted</text><text x="1393" y="633.500">OK</text>

<!-- ===== Panel 3 ===== -->
<g clip-path="url(#c3)">
 <path fill="none" stroke="#b0b0b0" stroke-width="1.1" stroke-dasharray="1.1 1.8" d="M105.500 761.700H1485.500M105.500 797.300H1485.500M105.500 832.700H1485.500M105.500 868.700H1485.500M105.500 904.300H1485.500M105.500 942H1485.500M105.500 966.700H1485.500"/>
 <rect x="161" y="987.500" width="1144" height="5" fill="#000"/>
 <g transform="translate(0,720) scale(.33333)"><path class="d" stroke="#000" stroke-width="7" d="M487 793h.1M563 790h.1M600 793h.1M607 793h.1M716 796h.1M760 793h.1M800 787h.1M812 798h.1M975 782h.1M1100 787h.1M1138 787h.1M1168 787h.1M1198 790h.1M1222 790h.1M1306 796h.1M1325 790h.1M1360 796h.1M1385 790h.1M1432 790h.1M1493 797h.1M490 800h.1M515 800h.1M545 800h.1M575 800h.1M625 800h.1M650 800h.1M685 800h.1M790 800h.1M850 800h.1M915 800h.1M940 800h.1M1040 800h.1M1065 800h.1M1150 800h.1M1235 800h.1M1275 800h.1M1340 800h.1M1450 800h.1"/></g>
 <path class="d" stroke="#000" stroke-width="2.400" d="M510 986h.1M523 983h.1M548 984h.1M575 985h.1M600 986h.1M640 985h.1M668 986h.1M700 986h.1M735 984h.1M760 985h.1M800 984h.1M835 986h.1M870 986h.1M905 985h.1M935 986h.1M966 984h.1M990 986h.1M1006 977h.1M1012 981h.1M1023 982h.1M1044 983h.1M1063 984h.1M1132 983h.1M1146 983h.1M1150 984h.1M1169 983h.1M1175 981h.1M1192 982h.1M1225 982h.1M1232 983h.1M1258 980h.1M1301 978h.1"/>
 <path fill="#000" d="M1262 987l3-3 3-1h8l3 2 4 2z"/>
 <path fill="none" stroke="#fff" stroke-width="1" stroke-dasharray="1.1 1.8" d="M161 991.700H1305"/>
 <use href="#m" y="943.500" stroke="#f00" stroke-width="4"/>
 <use href="#f" y="942.500" stroke="#f00" stroke-opacity=".75" stroke-width="3"/>
 <path class="d" stroke="#f00" stroke-width="2.600" d="M353 963h.1M381.700 971.700h.1M395.700 973h.1M253 975.700h.1M451 971.700h.1M453 975.700h.1M485.700 971.700h.1M510 960h.1M524 950h.1M590 947h.1M590 953h.1M640 970h.1M780 950h.1M797 953h.1M802 953h.1M977 973h.1M1016 964h.1M1069 959h.1M1069 966h.1M1081 973h.1M1272 947h.1"/>
 <use href="#m" y="761.700" stroke="#000" stroke-width="2.600"/>
 <use href="#f" y="832.700" stroke="#000" stroke-opacity=".75" stroke-width="2.800"/>
 <use href="#f" y="868.700" stroke="#000" stroke-opacity=".75" stroke-width="2.800"/>
 <path class="d" stroke="#000" stroke-width="2.800" d="M288 797.300h.1M510 797.300h.1M551 797.300h.1M590 797.300h.1M666 797.300h.1M829 797.300h.1M896 797.300h.1M968 797.300h.1M1069 797.300h.1M1160 797.300h.1"/>
 <use href="#v" x="0" y="993.500"/>
</g>
<rect x="105.500" y="725.500" width="1380" height="268" fill="none" stroke="#000" stroke-width="1.100"/>
<path fill="none" stroke="#000" stroke-width="1.100" d="M105 940.500H1486.500M162 993.500v4.900M376 993.500v4.900M590 993.500v4.900M803.500 993.500v4.900M1017.500 993.500v4.900M1231 993.500v4.900M1445 993.500v4.900M105.500 761.700h-4.900M105.500 797.300h-4.900M105.500 832.700h-4.900M105.500 868.700h-4.900M105.500 904.300h-4.900M105.500 942h-4.900M105.500 966.700h-4.900M105.500 991.700h-4.900M105.500 954.300h-2.800M105.500 979h-2.800"/>
<g class="r"><text x="95.500" y="766.500">not Kalman</text><text x="95.500" y="802">not track</text><text x="95.500" y="837.500">Ion. rad.</text><text x="95.500" y="873.500">dr &gt; 5</text><text x="95.500" y="909">OBS not OK</text><text x="95.500" y="947">10</text><text x="95.500" y="971.700">5</text><text x="95.500" y="996.700">0</text></g>
<text class="c" transform="translate(69,967) rotate(-90)">dr</text>
<g class="c"><text x="162" y="1014">0.0</text><text x="376" y="1014">0.2</text><text x="590" y="1014">0.4</text><text x="803.500" y="1014">0.6</text><text x="1017.500" y="1014">0.8</text><text x="1231" y="1014">1.0</text><text x="1445" y="1014">1.2</text></g>
<text class="r" x="1484" y="1032">1e6</text>
</svg>
</body>
</html>
